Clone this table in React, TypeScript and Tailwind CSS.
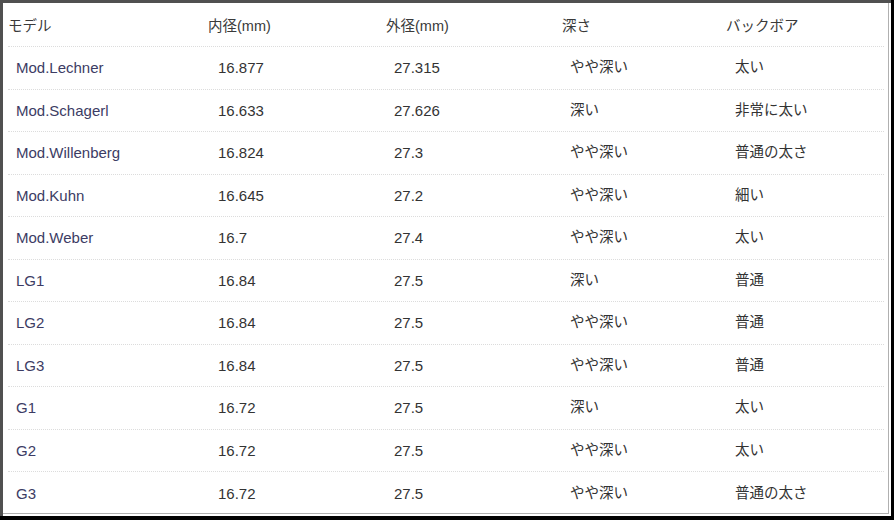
const rows: [string, string, string, string, string][] = [
  ['Mod.Lechner', '16.877', '27.315', 'やや深い', '太い'],
  ['Mod.Schagerl', '16.633', '27.626', '深い', '非常に太い'],
  ['Mod.Willenberg', '16.824', '27.3', 'やや深い', '普通の太さ'],
  ['Mod.Kuhn', '16.645', '27.2', 'やや深い', '細い'],
  ['Mod.Weber', '16.7', '27.4', 'やや深い', '太い'],
  ['LG1', '16.84', '27.5', '深い', '普通'],
  ['LG2', '16.84', '27.5', 'やや深い', '普通'],
  ['LG3', '16.84', '27.5', 'やや深い', '普通'],
  ['G1', '16.72', '27.5', '深い', '太い'],
  ['G2', '16.72', '27.5', 'やや深い', '太い'],
  ['G3', '16.72', '27.5', 'やや深い', '普通の太さ'],
]

const headers = ['モデル', '内径(mm)', '外径(mm)', '深さ', 'バックボア']

const cols = 'grid grid-cols-[200px_178px_176px_164px_1fr] items-center'

export default function App() {
  return (
    <div className="w-[894px] h-[520px] bg-black pr-[3px] pb-[4px] overflow-hidden">
      <div className="w-full h-full bg-white border-t-[3px] border-l-[3px] border-[#505050] pr-[2px] pb-[2px]">
        <div
          className="w-full h-full bg-white border-r border-b border-[#b0b0b0] pl-[5px] pr-[4px] text-[14.5px] text-[#333]"
          style={{ fontFamily: '"Liberation Sans", "Noto Sans CJK JP", sans-serif' }}
        >
          <div className={`${cols} h-[44px] pt-[5px] border-b border-dotted border-[#dcdcdc]`}>
            {headers.map((h) => (
              <div key={h} className="text-[#3a3a3a]">{h}</div>
            ))}
          </div>
          {rows.map((r, i) => (
            <div
              key={r[0]}
              className={`${cols} h-[42.5px] pt-[1px] ${i < rows.length - 1 ? 'border-b border-dotted border-[#dcdcdc]' : ''}`}
            >
              <div className="pl-2 text-[#3c3c64] text-[15px]">{r[0]}</div>
              <div className="pl-[10px] text-[15px]">{r[1]}</div>
              <div className="pl-2 text-[15px]">{r[2]}</div>
              <div className="pl-2">{r[3]}</div>
              <div className="pl-[9px]">{r[4]}</div>
            </div>
          ))}
        </div>
      </div>
    </div>
  )
}
